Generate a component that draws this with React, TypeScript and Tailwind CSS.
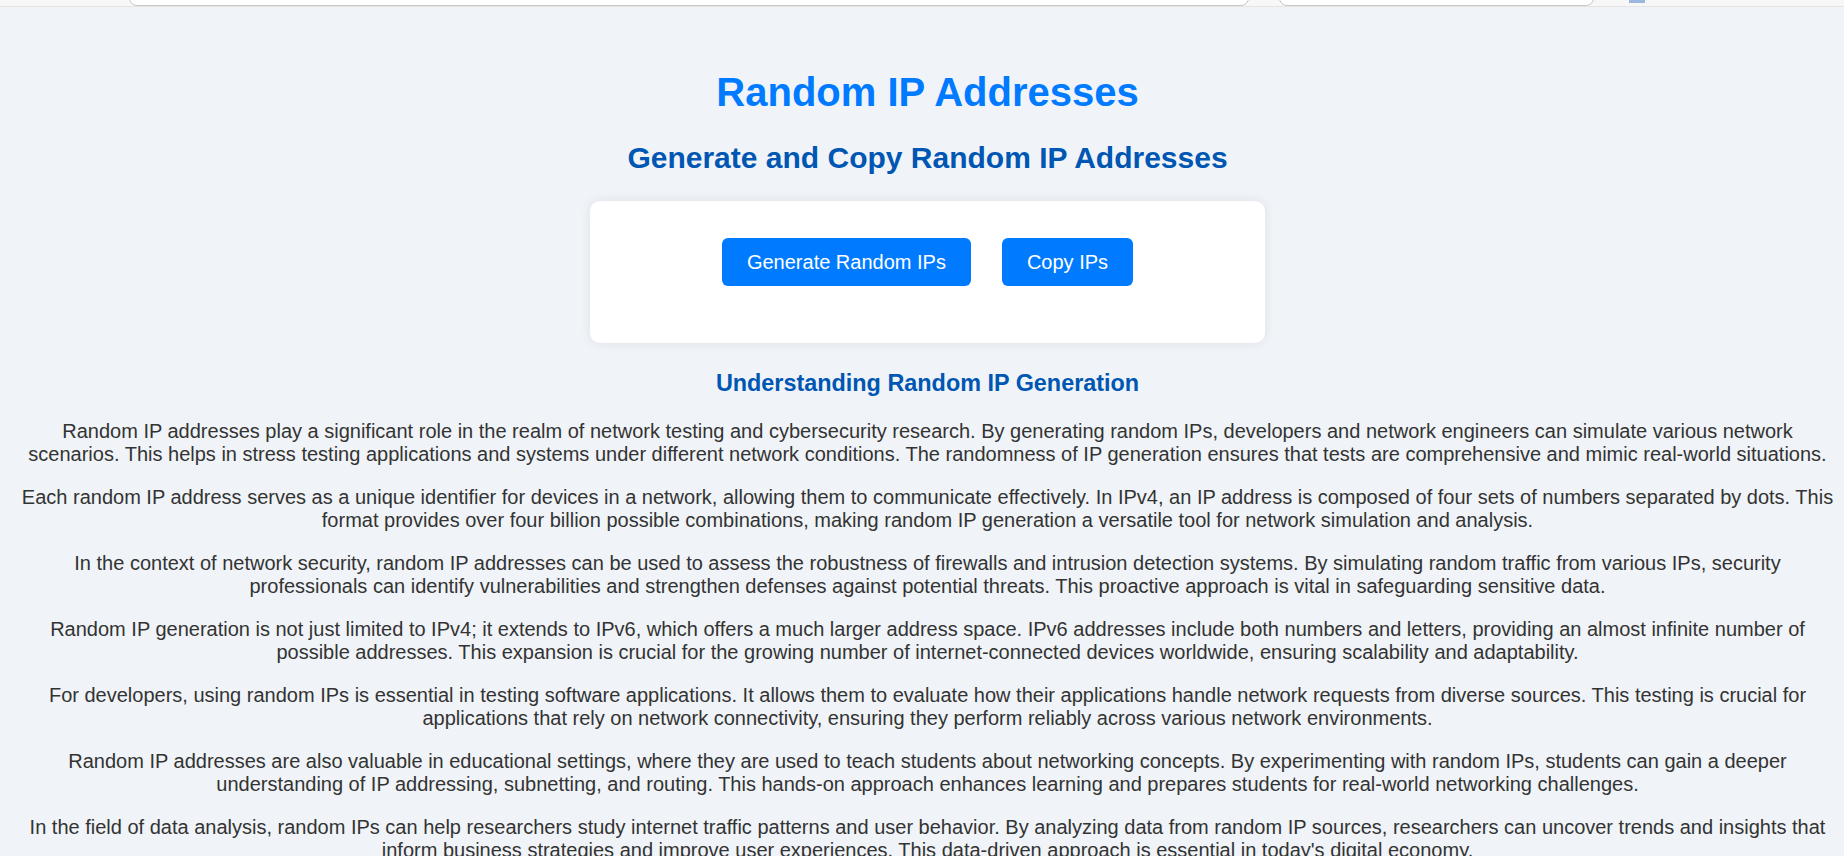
import React from "react";

const paragraphs = [
  "Random IP addresses play a significant role in the realm of network testing and cybersecurity research. By generating random IPs, developers and network engineers can simulate various network scenarios. This helps in stress testing applications and systems under different network conditions. The randomness of IP generation ensures that tests are comprehensive and mimic real-world situations.",
  "Each random IP address serves as a unique identifier for devices in a network, allowing them to communicate effectively. In IPv4, an IP address is composed of four sets of numbers separated by dots. This format provides over four billion possible combinations, making random IP generation a versatile tool for network simulation and analysis.",
  "In the context of network security, random IP addresses can be used to assess the robustness of firewalls and intrusion detection systems. By simulating random traffic from various IPs, security professionals can identify vulnerabilities and strengthen defenses against potential threats. This proactive approach is vital in safeguarding sensitive data.",
  "Random IP generation is not just limited to IPv4; it extends to IPv6, which offers a much larger address space. IPv6 addresses include both numbers and letters, providing an almost infinite number of possible addresses. This expansion is crucial for the growing number of internet-connected devices worldwide, ensuring scalability and adaptability.",
  "For developers, using random IPs is essential in testing software applications. It allows them to evaluate how their applications handle network requests from diverse sources. This testing is crucial for applications that rely on network connectivity, ensuring they perform reliably across various network environments.",
  "Random IP addresses are also valuable in educational settings, where they are used to teach students about networking concepts. By experimenting with random IPs, students can gain a deeper understanding of IP addressing, subnetting, and routing. This hands-on approach enhances learning and prepares students for real-world networking challenges.",
  "In the field of data analysis, random IPs can help researchers study internet traffic patterns and user behavior. By analyzing data from random IP sources, researchers can uncover trends and insights that inform business strategies and improve user experiences. This data-driven approach is essential in today's digital economy.",
];

function BrowserStrip() {
  return (
    <div className="relative h-[7px] overflow-hidden border-b border-[#e4e4e4] bg-[#f7f7f7]">
      <div className="absolute left-[129px] top-[-10px] h-[16px] w-[1120px] rounded-[8px] border border-[#c8c8c8] bg-white" />
      <div className="absolute left-[1279px] top-[-10px] h-[16px] w-[315px] rounded-[8px] border border-[#c8c8c8] bg-white" />
      <div className="absolute left-[1629px] top-[0px] h-[3px] w-[16px] bg-[#9db8e0]" />
    </div>
  );
}

export default function App() {
  return (
    <div className="min-h-screen bg-[#f0f4f8] font-['Liberation_Sans',Arial,sans-serif] text-[#333]">
      <BrowserStrip />
      <div className="pl-[17px] pr-[6px] pt-[62px] text-center">
        <h1 className="text-[40px] font-bold leading-[46px] text-[#007bff]">
          Random IP Addresses
        </h1>
        <h2 className="mt-[25px] text-[30px] font-bold leading-[35px] text-[#0056b3]">
          Generate and Copy Random IP Addresses
        </h2>

        <div className="mx-auto mt-[26px] w-[675px] rounded-[10px] bg-white pb-[57px] pt-[37px] shadow-[0_0_12px_rgba(0,0,0,0.08)]">
          <div className="flex justify-center gap-[31px]">
            <button className="h-[48px] rounded-[6px] bg-[#007bff] px-[25px] text-[20px] leading-[23px] text-white">
              Generate Random IPs
            </button>
            <button className="h-[48px] rounded-[6px] bg-[#007bff] px-[25px] text-[20px] leading-[23px] text-white">
              Copy IPs
            </button>
          </div>
        </div>

        <h3 className="mt-[26.5px] text-[23.4px] font-bold leading-[27px] text-[#0056b3]">
          Understanding Random IP Generation
        </h3>

        <div className="mt-[23.6px] flex flex-col gap-[20px]">
          {paragraphs.map((p, i) => (
            <p key={i} className="text-[20px] leading-[23px]">
              {p}
            </p>
          ))}
        </div>
      </div>
    </div>
  );
}
